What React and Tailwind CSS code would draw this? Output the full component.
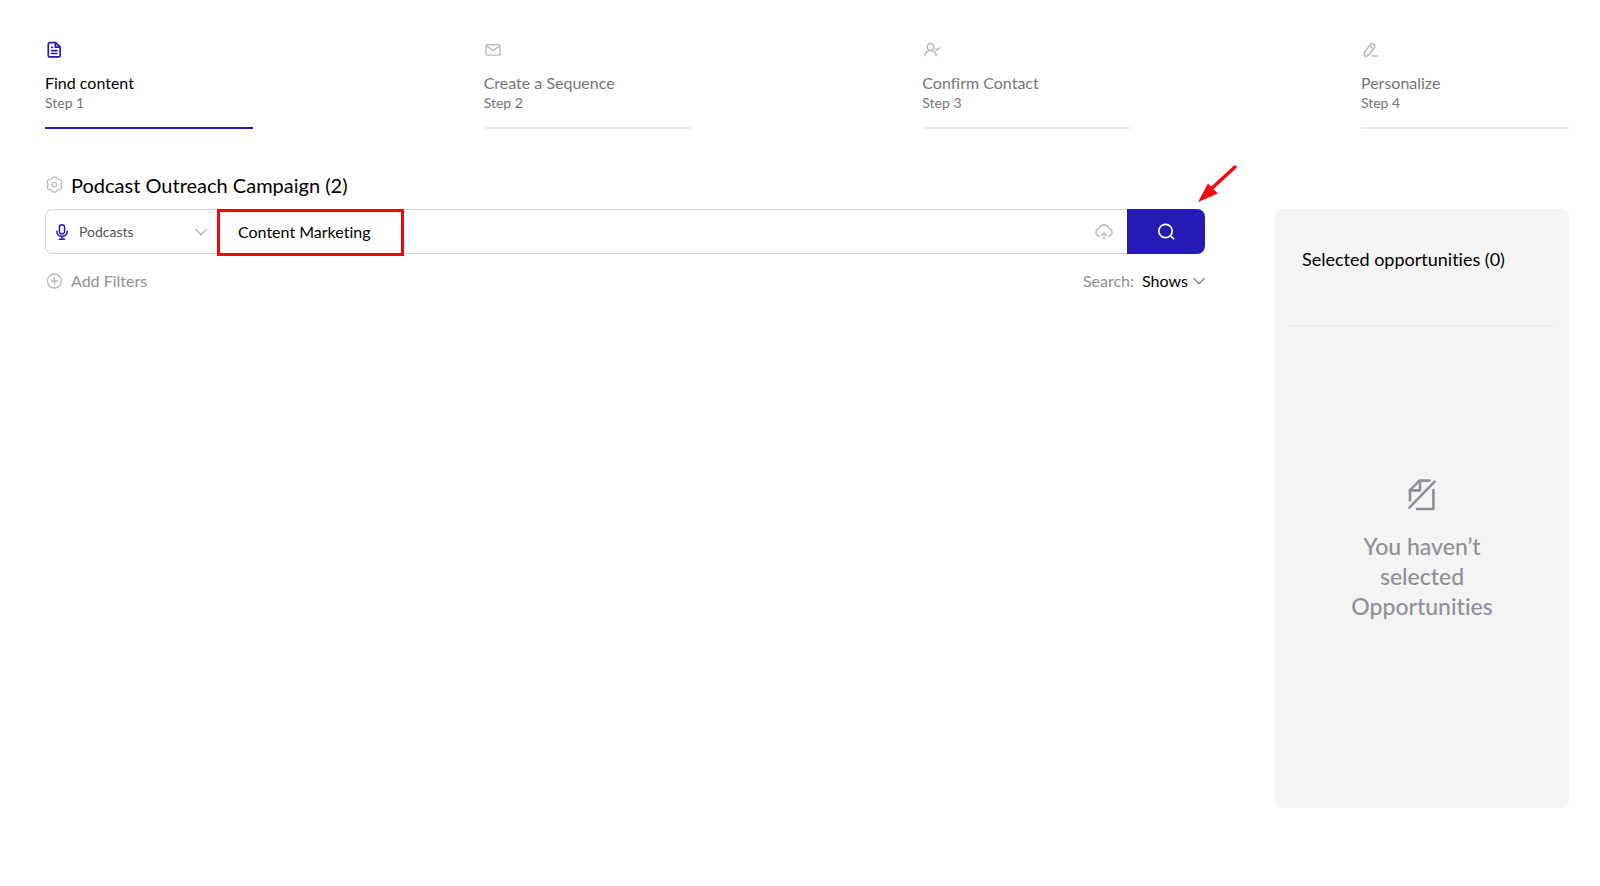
import { useState } from "react";

const FileIcon = () => (
  <svg className="size-5" viewBox="0 0 20 20" fill="none" stroke="currentColor" strokeWidth="1.7" strokeLinejoin="round" strokeLinecap="round">
    <path d="M10.600 2.600H5a1.700 1.700 0 0 0-1.700 1.700v10.900A1.700 1.700 0 0 0 5 16.900h8.400a1.700 1.700 0 0 0 1.700-1.700V7.100z" />
    <path d="M10.400 2.800v4.400h4.400" />
    <path d="M6.600 10.600h5.400M6.600 13.500h5.400" />
    <path d="M6.800 7.400h.6" />
  </svg>
);

const MailIcon = () => (
  <svg className="size-5" viewBox="0 0 20 20" fill="none" stroke="currentColor" strokeWidth="1.4" strokeLinejoin="round" strokeLinecap="round">
    <rect x="2" y="4.700" width="14" height="10.400" rx="1.200" />
    <path d="M2.600 6l6.400 4.600L15.400 6" />
  </svg>
);

const ContactIcon = () => (
  <svg className="size-5" viewBox="0 0 20 20" fill="none" stroke="currentColor" strokeWidth="1.5" strokeLinejoin="round" strokeLinecap="round">
    <circle cx="8.600" cy="7" r="3.400" />
    <path d="M3 15.600c.3-3 2.600-5.200 5.600-5.200s5.300 2.200 5.600 5.200" />
    <path d="M13.900 8.900l1.300 1.200 2.300-2.400" />
  </svg>
);

const PencilIcon = () => (
  <svg className="size-5" viewBox="0 0 20 20" fill="none" stroke="currentColor" strokeWidth="1.5" strokeLinejoin="round" strokeLinecap="round">
    <path d="M3.600 12l6-7.700a1.900 1.900 0 0 1 2.700-.3l1 .8a1.900 1.900 0 0 1 .3 2.700l-6 7.700-2.200 1.100c-1.400.5-2.300-.2-2.200-1.600z" />
    <path d="M8.600 5.800l3.800 3" />
    <path d="M11.400 16h4.800" />
  </svg>
);

const GearIcon = () => (
  <svg className="size-5 text-[#b9babd]" viewBox="0 0 20 20" fill="none" stroke="currentColor" strokeWidth="1.3" strokeLinejoin="round">
    <path d="M7.600 2.400Q9.500 1.200 11.400 2.400Q12.300 4.800 14.900 4.300Q16.900 5.300 16.800 7.500Q15.200 9.500 16.800 11.500Q16.900 13.700 14.900 14.700Q12.300 14.200 11.400 16.600Q9.500 17.800 7.600 16.600Q6.700 14.200 4.100 14.700Q2.100 13.700 2.200 11.500Q3.800 9.500 2.200 7.500Q2.100 5.300 4.100 4.300Q6.700 4.800 7.600 2.400z" />
    <circle cx="9.500" cy="9.500" r="2.200" />
  </svg>
);

const MicIcon = () => (
  <svg className="h-4 w-3 shrink-0 text-[#241bb5]" viewBox="0 0 12 16" fill="none" stroke="currentColor" strokeWidth="1.5" strokeLinecap="round">
    <rect x="3.400" y=".8" width="5.200" height="9" rx="2.600" />
    <path d="M.8 7.300c0 3 2.200 5 5.200 5s5.200-2 5.200-5M6 12.300v2.700M3.400 15.200h5.200" />
  </svg>
);

const ChevronIcon = () => (
  <svg className="h-2 w-3 shrink-0" viewBox="0 0 12 8" fill="none" stroke="currentColor" strokeWidth="1.6" strokeLinecap="round" strokeLinejoin="round">
    <path d="M1 1.700l5 5 5-5" />
  </svg>
);

const CloudIcon = () => (
  <svg className="h-4 w-[18px]" viewBox="0 0 18 16" fill="none" stroke="currentColor" strokeWidth="1.4" strokeLinecap="round" strokeLinejoin="round">
    <path d="M5 12H4.200A3.600 3.600 0 0 1 3.800 4.900C4.500 2.300 6.500.8 9 .8s4.500 1.500 5.200 4.100A3.600 3.600 0 0 1 13.800 12H13" />
    <path d="M9 15V9.200M6.600 11.300L9 9l2.400 2.300" />
  </svg>
);

const PlusCircleIcon = () => (
  <svg className="size-5 text-[#b9babd]" viewBox="0 0 20 20" fill="none" stroke="currentColor" strokeWidth="1.3" strokeLinecap="round">
    <circle cx="9.500" cy="10" r="7" />
    <path d="M9.500 7v6M6.500 10h6" />
  </svg>
);

const SearchIcon = () => (
  <svg className="size-5" viewBox="0 0 20 20" fill="none" stroke="currentColor" strokeWidth="1.7" strokeLinecap="round">
    <circle cx="9.500" cy="9" r="6.700" />
    <path d="M14.400 13.800l3.200 2.800" />
  </svg>
);

const NoFileIcon = () => (
  <svg className="h-8 w-7" viewBox="0 0 28 32" fill="none" stroke="currentColor" strokeWidth="2.600" strokeLinecap="round" strokeLinejoin="round">
    <path d="M21.500 1.600H11.500L2 11.200V21.500" />
    <path d="M12 2v9.400H2" />
    <path d="M25.400 11v19H9" />
    <path d="M1.400 28.600L26.600 2.600" />
  </svg>
);

const steps = [
  { title: "Find content", step: "Step 1", icon: FileIcon, active: true },
  { title: "Create a Sequence", step: "Step 2", icon: MailIcon },
  { title: "Confirm Contact", step: "Step 3", icon: ContactIcon },
  { title: "Personalize", step: "Step 4", icon: PencilIcon },
];

function Step({ title, step, icon: Icon, active }) {
  return (
    <li
      className={`w-52 border-b-2 pb-4 ${active ? "border-[#241bb5]" : "border-[#e9eaee]"}`}
      aria-current={active ? "step" : undefined}
    >
      <div className={active ? "text-[#241bb5]" : "text-[#b9babd]"}>
        <Icon />
      </div>
      <p className={`mt-[11px] text-base leading-6 ${active ? "text-black" : "text-[#757575]"}`}>{title}</p>
      <p className="text-sm leading-4 text-[#757575]">{step}</p>
    </li>
  );
}

function SearchBar() {
  const [type, setType] = useState("Podcasts");
  const [query, setQuery] = useState("Content Marketing");

  return (
    <form className="relative mt-[10px] flex h-[45px]" onSubmit={(e) => e.preventDefault()}>
      <div className="flex min-w-0 flex-1 rounded-l-lg border border-r-0 border-[#d5d6de]">
        <label className="flex w-[171px] items-center px-[10px] text-[#b9babd]">
          <MicIcon />
          <select
            aria-label="Content type"
            className="ml-[11px] mr-1 min-w-0 flex-1 appearance-none bg-transparent text-sm text-[#555555] outline-none"
            value={type}
            onChange={(e) => setType(e.target.value)}
          >
            <option>Podcasts</option>
            <option>Articles</option>
          </select>
          <ChevronIcon />
        </label>
        <input
          type="text"
          aria-label="Keyword"
          className="min-w-0 flex-1 pl-[21px] text-base text-black outline-none"
          value={query}
          onChange={(e) => setQuery(e.target.value)}
        />
        <button type="button" aria-label="Upload list" className="px-[14px] text-[#b9babd]">
          <CloudIcon />
        </button>
      </div>
      <button type="submit" aria-label="Search" className="flex w-[78px] items-center justify-center rounded-r-lg bg-[#241bb5] text-white">
        <SearchIcon />
      </button>

      {/* Callouts over the search bar */}
      <div className="pointer-events-none absolute left-[172px] top-0 h-[47px] w-[187px] border-3 border-[#ff0008]" />
      <svg className="pointer-events-none absolute -right-8 -top-11 h-[38px] w-10" viewBox="0 0 40 38" fill="#ff0008">
        <path d="M38 2L14 24" stroke="#ff0008" strokeWidth="3.400" strokeLinecap="round" />
        <path d="M1 37L11 18.500l9.800 9.900z" />
      </svg>
    </form>
  );
}

function App() {
  const [scope, setScope] = useState("Shows");

  return (
    <div className="min-h-screen bg-white pb-20 pl-[45px] pr-[31px] pt-10 font-['Lato','Noto_Sans',sans-serif] [font-variant-ligatures:none]">
      <ol className="flex justify-between">
        {steps.map((item) => (
          <Step key={item.step} {...item} />
        ))}
      </ol>

      <div className="mt-[42px] flex items-start gap-[70px]">
        <main className="min-w-0 flex-1">
          <h1 className="flex items-center gap-[6px] text-xl leading-7 text-black">
            <GearIcon />
            Podcast Outreach Campaign (2)
          </h1>
          <SearchBar />
          <div className="mt-[15px] flex items-center justify-between text-base leading-6 text-[#8e9099]">
            <button type="button" className="flex items-center gap-[6px]">
              <PlusCircleIcon />
              Add Filters
            </button>
            <label className="flex items-center">
              Search:
              <select
                className="ml-2 mr-[5px] appearance-none bg-transparent text-black outline-none"
                value={scope}
                onChange={(e) => setScope(e.target.value)}
              >
                <option>Shows</option>
              </select>
              <ChevronIcon />
            </label>
          </div>
        </main>

        <aside className="mt-[38px] flex min-h-[599px] w-[294px] flex-col rounded-lg bg-[#f4f4f4] px-[13px]">
          <h2 className="border-b border-[#e9eaee] pb-[52px] pl-[14px] pt-9 text-[18px] leading-7 text-black">
            Selected opportunities (0)
          </h2>
          <div className="flex flex-col items-center pt-[153px] text-[#8e9099]">
            <NoFileIcon />
            <p className="mt-5 w-40 text-center text-[23px] font-medium leading-[30px]">You haven’t selected Opportunities</p>
          </div>
        </aside>
      </div>
    </div>
  );
}

export default App;
